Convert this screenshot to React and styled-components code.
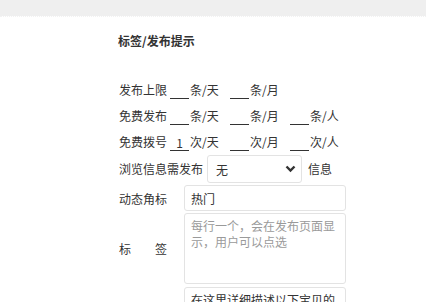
import React from "react";
import styled, { createGlobalStyle } from "styled-components";

const GlobalStyle = createGlobalStyle`
  body {
    margin: 0;
    background: #fff;
    font-family: "Noto Sans CJK SC", "Noto Sans", sans-serif;
    color: #333;
    font-size: 12px;
  }
`;

const TopBar = styled.div`
  height: 16px;
  background: #efefef;
  background-clip: padding-box;
  border-bottom: 1px dotted #f2f2f2;
`;

const Section = styled.div`
  padding-left: 118px;
`;

const Title = styled.h3`
  margin: 0;
  padding-top: 14px;
  font-size: 12px;
  font-weight: bold;
  line-height: 20px;
  color: #333;
`;

const Rows = styled.div`
  display: flex;
  flex-direction: column;
  padding-top: 26px;
  padding-left: 1px;
`;

const InlineRow = styled.div`
  display: flex;
  align-items: center;
  height: ${(p) => p.h || 26}px;
  line-height: 16px;
  white-space: nowrap;
`;

const Label = styled.span`
  margin-right: 3px;
`;

const Group = styled.span`
  display: inline-flex;
  align-items: center;
  width: 60px;
`;

const Blank = styled.span`
  display: inline-block;
  width: 19px;
  height: 15px;
  margin-top: 2px;
  margin-right: 1px;
  border-bottom: 1px solid #333;
  text-align: center;
  line-height: 16px;
  color: #333;
`;

const SelectWrap = styled.div`
  position: relative;
  margin: 0 6px 0 4px;
`;

const Select = styled.select`
  appearance: none;
  width: 95px;
  height: 28px;
  padding: 0 8px;
  border: 1px solid #e3e3e3;
  border-radius: 3px;
  background: #fff;
  font-family: inherit;
  font-size: 12px;
  color: #333;
  outline: none;
`;

const Arrow = styled.svg`
  position: absolute;
  right: 6px;
  top: 10px;
  pointer-events: none;
`;

const FieldRow = styled.div`
  display: flex;
  align-items: center;
  margin-top: ${(p) => p.mt || 2}px;
`;

const FieldLabel = styled.div`
  width: 65px;
  flex-shrink: 0;
`;

const Input = styled.input`
  box-sizing: border-box;
  width: 162px;
  height: 26px;
  padding: 0 6px;
  border: 1px solid #e3e3e3;
  border-radius: 3px;
  font-family: inherit;
  font-size: 12px;
  color: #333;
  outline: none;
`;

const Area = styled.textarea`
  box-sizing: border-box;
  width: 162px;
  height: ${(p) => p.h || 72}px;
  padding: 4px 6px;
  border: 1px solid #e3e3e3;
  border-radius: 3px;
  font-family: inherit;
  font-size: 12px;
  line-height: 16px;
  color: #333;
  resize: none;
  outline: none;
  &::placeholder {
    color: #9a9a9a;
  }
`;

const Unit = ({ value, text }) => (
  <Group>
    <Blank>{value}</Blank>
    {text}
  </Group>
);

const App = () => {
  return (
    <>
      <GlobalStyle />
      <TopBar />
      <Section>
        <Title>标签/发布提示</Title>
        <Rows>
          <InlineRow>
            <Label>发布上限</Label>
            <Unit text="条/天" />
            <Unit text="条/月" />
          </InlineRow>
          <InlineRow>
            <Label>免费发布</Label>
            <Unit text="条/天" />
            <Unit text="条/月" />
            <Unit text="条/人" />
          </InlineRow>
          <InlineRow>
            <Label>免费拨号</Label>
            <Unit value="1" text="次/天" />
            <Unit text="次/月" />
            <Unit text="次/人" />
          </InlineRow>
          <InlineRow h={28}>
            <span>浏览信息需发布</span>
            <SelectWrap>
              <Select defaultValue="none">
                <option value="none">无</option>
              </Select>
              <Arrow width="11" height="8" viewBox="0 0 11 8">
                <path d="M1.5 1.5 L5.5 5.5 L9.5 1.5" fill="none" stroke="#333" strokeWidth="2.4" />
              </Arrow>
            </SelectWrap>
            <span>信息</span>
          </InlineRow>
          <FieldRow>
            <FieldLabel>动态角标</FieldLabel>
            <Input defaultValue="热门" />
          </FieldRow>
          <FieldRow>
            <FieldLabel>标　　签</FieldLabel>
            <Area h={71} placeholder="每行一个，会在发布页面显示，用户可以点选" />
          </FieldRow>
          <FieldRow mt={3}>
            <FieldLabel />
            <Area h={60} defaultValue="在这里详细描述以下宝贝的" />
          </FieldRow>
        </Rows>
      </Section>
    </>
  );
};

export default App;
